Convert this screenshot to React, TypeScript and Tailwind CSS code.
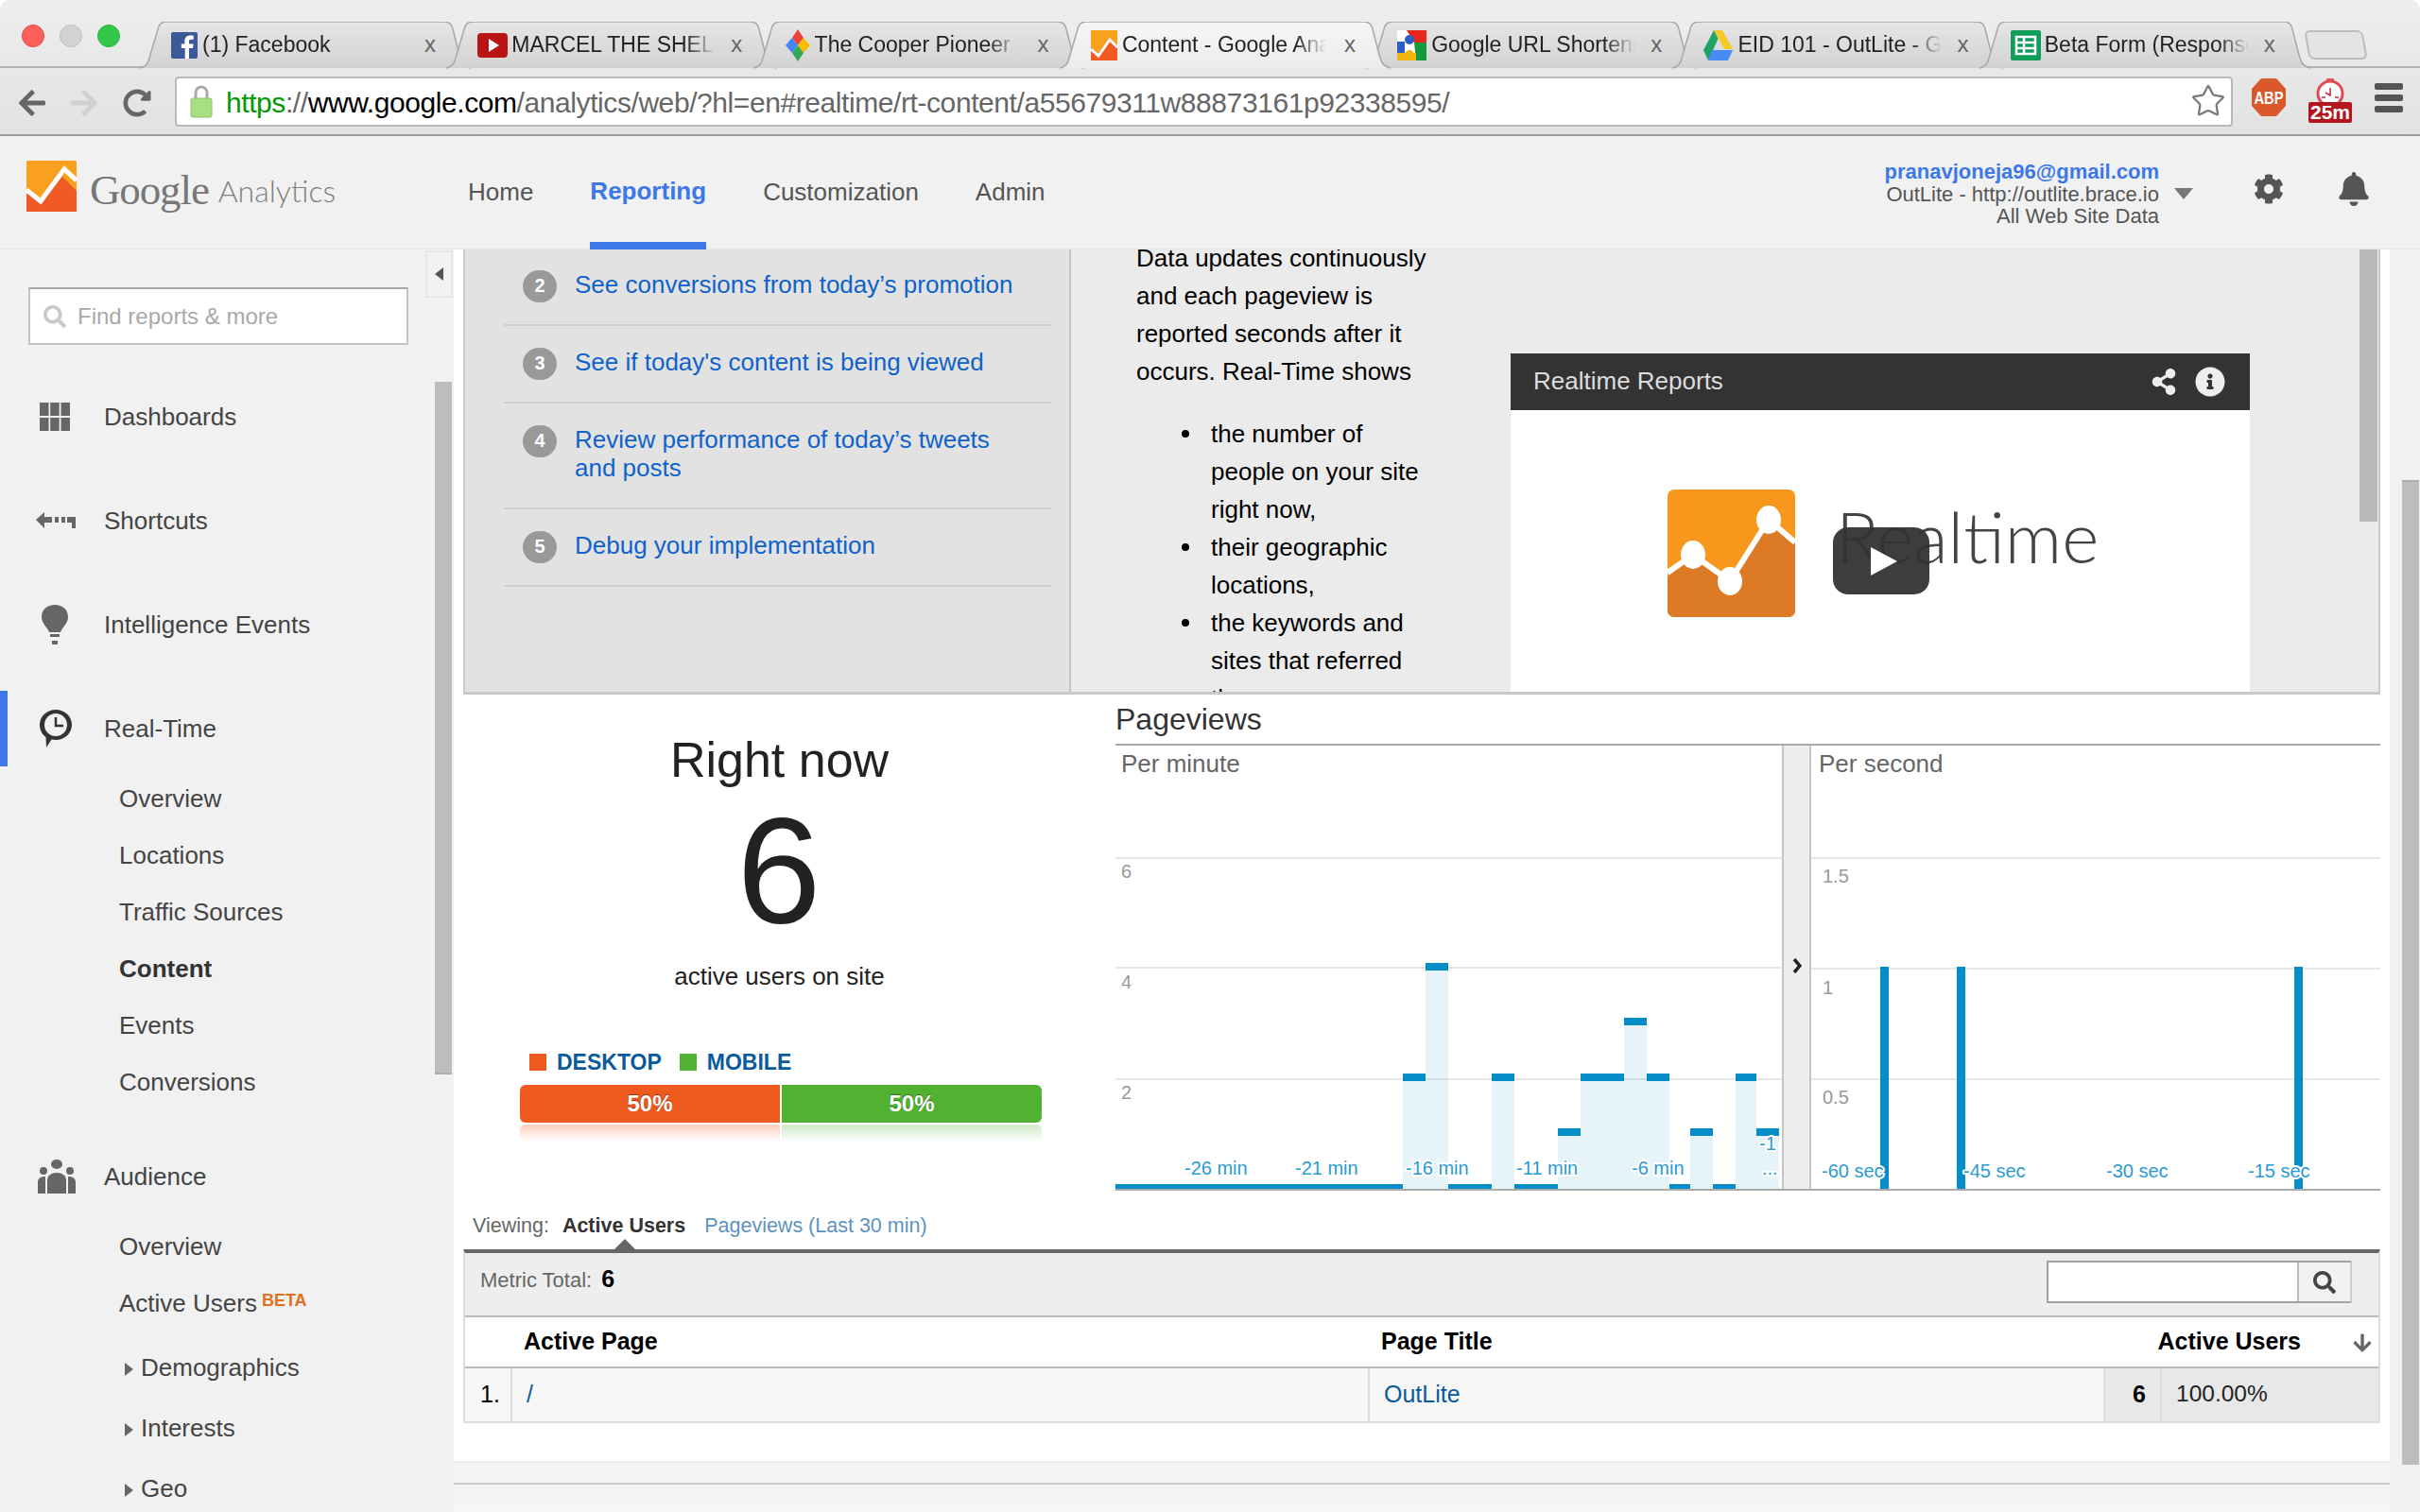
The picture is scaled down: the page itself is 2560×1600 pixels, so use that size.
import React from "react";
import { FaBell, FaCog, FaInfoCircle, FaSearch, FaShareAlt, FaArrowLeft, FaArrowRight, FaRedoAlt, FaArrowDown } from "react-icons/fa";
import { Star } from "lucide-react";

const Facebook = () => (
  <svg width="28" height="28" viewBox="0 0 28 28" className="shrink-0">
    <rect width="28" height="28" rx="2" fill="#3d5a98" />
    <path d="M19 28V17h4l.6-4.500H19V10c0-1.300.4-2.200 2.300-2.200h2.400V3.700c-.4 0-1.800-.2-3.500-.2-3.500 0-5.900 2.100-5.900 6v3H10.800V17h3.900v11z" fill="#fff" />
  </svg>
);
const Youtube = () => (
  <svg width="32" height="32" viewBox="0 0 32 32" className="shrink-0">
    <rect y="3" width="32" height="26" rx="4" fill="#b81414" />
    <path d="M12 9l11 7-11 7z" fill="#fff" />
  </svg>
);
const Pioneer = () => (
  <svg width="28" height="34" viewBox="0 0 28 34" className="shrink-0">
    <path d="M14 0l6 9-6 8-6-8z" fill="#ea4335" />
    <path d="M20 9l7 8-7 8-6-8z" fill="#fbbc05" />
    <path d="M8 9l6 8-6 8-7-8z" fill="#4285f4" />
    <path d="M14 17l6 8-6 9-6-9z" fill="#34a853" />
  </svg>
);
const GaFav = () => (
  <svg width="28" height="32" viewBox="0 0 28 32" className="shrink-0">
    <rect width="28" height="32" fill="#f9a11f" />
    <path d="M0 32V18l8 6 12-16 8 8v16z" fill="#f15a22" />
    <path d="M0 20l8 7L20 10l8 8" stroke="#fff" strokeWidth="3" fill="none" />
  </svg>
);
const GoogleFav = () => (
  <svg width="31" height="32" viewBox="0 0 31 32" className="shrink-0">
    <rect width="31" height="32" fill="#fff" />
    <path d="M10 0h21v13H18z" fill="#e8261c" />
    <path d="M0 12h8v12H0z" fill="#2a5fc4" />
    <path d="M18 13h13v19H20z" fill="#119b3c" />
    <path d="M0 24h20v8H0z" fill="#f2b50f" />
    <circle cx="13" cy="10" r="5" fill="#2a5fc4" />
    <circle cx="13" cy="26" r="5" fill="#f2b50f" />
  </svg>
);
const Drive = () => (
  <svg width="32" height="32" viewBox="0 0 32 32" className="shrink-0">
    <path d="M11 0h9l11 20h-9z" fill="#f7c927" />
    <path d="M11 0l4.500 9L5 32l-5-11z" fill="#1ea362" />
    <path d="M9 21h22l-5 11H5z" fill="#4a8af4" />
  </svg>
);
const Sheets = () => (
  <svg width="32" height="32" viewBox="0 0 32 32" className="shrink-0">
    <rect width="32" height="32" rx="2" fill="#0f9d58" />
    <path d="M6 7h20v18H6zM6 13h20M6 19h20M14 7v18" fill="none" stroke="#fff" strokeWidth="2.500" />
  </svg>
);

const tabs = [
  { t: "(1) Facebook", i: <Facebook />, gap: "mr-[5px]" },
  { t: "MARCEL THE SHELL", i: <Youtube />, gap: "mr-[4px]" },
  { t: "The Cooper Pioneer |", i: <Pioneer />, gap: "mr-[4px]" },
  { t: "Content - Google Analytics", i: <GaFav />, gap: "mr-[5px]", active: true },
  { t: "Google URL Shortener", i: <GoogleFav />, gap: "mr-[5px]" },
  { t: "EID 101 - OutLite - Google", i: <Drive />, gap: "mr-[4px]" },
  { t: "Beta Form (Responses)", i: <Sheets />, gap: "mr-[4px]" },
];

function Tab({ t, i, gap, active }: { t: string; i: React.ReactNode; gap: string; active?: boolean }) {
  return (
    <div className={`relative w-[324.3px] h-[49px] shrink-0 ${active ? "z-10" : ""}`}>
      <svg className="absolute left-0 top-0" width="350" height="50" viewBox="0 0 350 50">
        <defs>
          <linearGradient id={active ? "tabA" : "tabI"} x1="0" y1="0" x2="0" y2="1">
            <stop offset="0" stopColor={active ? "#f6f6f6" : "#e6e6e6"} />
            <stop offset="1" stopColor={active ? "#ececec" : "#d2d2d2"} />
          </linearGradient>
        </defs>
        <path
          d="M0 49c8-2 9-6 11-14L19 8c1-5 4-8 9-8h294c5 0 8 3 9 8l7 27c2 8 4 12 12 14"
          fill={`url(#${active ? "tabA" : "tabI"})`}
          stroke="#a8a8a8"
          strokeWidth="1.500"
        />
      </svg>
      <div className="absolute left-[33px] right-0 top-0 h-[49px] flex items-center">
        <span className={`${gap} flex items-center`}>{i}</span>
        <span className="w-[216px] overflow-hidden whitespace-nowrap text-[23px] text-[#222] [mask-image:linear-gradient(to_right,#000_85%,transparent_100%)]">
          {t}
        </span>
      </div>
      <span className="absolute left-[301px] top-[9px] text-[24px] leading-[30px] text-[#666]">x</span>
    </div>
  );
}

function TopChrome() {
  return (
    <div className="h-[144px] shrink-0 flex flex-col border-b-2 border-[#9a9a9a] bg-gradient-to-b from-[#eeeeee] to-[#e2e2e2] rounded-t-[10px]">
      <div className="h-[72px] flex items-start pt-[23px] border-b-2 border-[#b4b4b4]">
        <div className="flex gap-[16px] pl-[23px] pr-[28px] pt-[3px]">
          <span className="w-[24px] h-[24px] rounded-full bg-[#fc615d] border border-[#e2463f]" />
          <span className="w-[24px] h-[24px] rounded-full bg-[#d2d2d2] border border-[#c0c0c0]" />
          <span className="w-[24px] h-[24px] rounded-full bg-[#34c84a] border border-[#2ab13e]" />
        </div>
        <div className="flex -ml-[7px]">
          {tabs.map((x) => (
            <Tab key={x.t} {...x} />
          ))}
        </div>
        <div className="ml-[22px] mt-[9px] w-[62px] h-[31px] rounded-[6px] border-2 border-[#bdbdbd] bg-[#e4e4e4] [transform:skewX(10deg)]" />
      </div>
      <div className="h-[70px] flex items-center">
        <div className="w-[185px] flex items-center pl-[18px] pt-[3px] shrink-0">
          <FaArrowLeft size={32} color="#666" />
          <FaArrowRight size={32} color="#d0d0d0" className="ml-[23px]" />
          <FaRedoAlt size={30} color="#666" className="ml-[25px]" />
        </div>
        <div className="w-[2177px] h-[53px] bg-white border-2 border-[#b9b9b9] rounded-[4px] flex items-center pl-[14px] pr-[5px] shrink-0">
          <svg width="24" height="36" viewBox="0 0 24 36" className="shrink-0">
            <path d="M6 17V9a6 6 0 0 1 12 0v8" fill="none" stroke="#a9a9a9" strokeWidth="3" />
            <rect x="1" y="15" width="22" height="20" rx="2" fill="#a8de84" stroke="#8fc46c" />
          </svg>
          <span className="ml-[14px] pt-[3px] text-[30px] leading-none whitespace-nowrap text-[#666] tracking-[-0.42px]">
            <span className="text-[#009a00]">https</span>://<span className="text-black">www.google.com</span>
            /analytics/web/?hl=en#realtime/rt-content/a55679311w88873161p92338595/
          </span>
          <Star size={38} strokeWidth={1.4} color="#777" className="ml-auto" />
        </div>
        <svg width="38" height="42" viewBox="0 0 38 42" className="ml-[19px] shrink-0 -mt-[8px]">
          <path d="M11 1h16l10 11v18L27 41H11L1 30V12z" fill="#d9582c" />
          <text x="19" y="28" textAnchor="middle" fontSize="19" fontWeight="700" fill="#fff" fontFamily="Liberation Sans, sans-serif" textLength="31" lengthAdjust="spacingAndGlyphs">ABP</text>
        </svg>
        <div className="ml-[23px] w-[46px] flex flex-col items-center shrink-0 -mt-[2px]">
          <svg width="36" height="28" viewBox="0 0 36 28" className="-mb-[3px]">
            <rect x="14" y="0" width="8" height="4" fill="#e4545c" />
            <circle cx="18" cy="16" r="13" fill="#fff" stroke="#df4b53" strokeWidth="3" />
            <path d="M9 20h4M23 20h4M18 10l0 8-5-3" stroke="#b3333b" strokeWidth="1.500" fill="none" />
          </svg>
          <div className="w-[46px] h-[22px] bg-[#b3161e] text-white text-[21px] font-bold leading-[22px] text-center rounded-[2px]">25m</div>
        </div>
        <div className="ml-[24px] flex flex-col gap-[5px] -mt-[8px] shrink-0">
          <span className="w-[30px] h-[7px] rounded-[2px] bg-[#555]" />
          <span className="w-[30px] h-[7px] rounded-[2px] bg-[#555]" />
          <span className="w-[30px] h-[7px] rounded-[2px] bg-[#555]" />
        </div>
      </div>
    </div>
  );
}

function AppHeader() {
  return (
    <div className="h-[120px] shrink-0 bg-[#f1f1f1] flex border-b border-[#e8e8e8]">
      <div className="pl-[28px] pt-[26px] flex items-start w-[495px] shrink-0">
        <svg width="53" height="54" viewBox="0 0 53 54" className="shrink-0">
          <rect width="53" height="54" rx="1.500" fill="#f9a01e" />
          <path d="M0 54V34l15 10L38 17l15 15v22z" fill="#f15a24" />
          <path d="M0 31l15 12L40 9l13 12" fill="none" stroke="#fff" strokeWidth="5" />
        </svg>
        <span className="ml-[14px] mt-[6px] font-['Liberation_Serif',serif] text-[45px] leading-[50px] tracking-[-0.025em] text-[#777]">Google</span>
        <span className="ml-[10px] mt-[12px] font-['Lato',sans-serif] font-light text-[32px] leading-[40px] text-[#808080]">Analytics</span>
      </div>
      <nav className="flex gap-[60px] text-[26px] text-[#555]">
        <span className="h-[120px] flex items-center -mt-[1px]">Home</span>
        <span className="h-[120px] flex items-center pt-[5px] border-b-8 border-[#3c78e8] text-[#3c78e8] font-bold">Reporting</span>
        <span className="h-[120px] flex items-center -mt-[1px]">Customization</span>
        <span className="h-[120px] flex items-center -mt-[1px]">Admin</span>
      </nav>
      <div className="ml-auto flex items-start pt-[26px] pr-[52px]">
        <div className="text-right text-[22px] leading-[23.5px] text-[#555]">
          <div className="font-bold text-[#3c78e8]">pranavjoneja96@gmail.com</div>
          <div>OutLite - http://outlite.brace.io</div>
          <div>All Web Site Data</div>
        </div>
        <svg width="20" height="12" viewBox="0 0 20 12" className="ml-[16px] mt-[29px]"><path d="M0 0h20L10 12z" fill="#777" /></svg>
        <FaCog size={32} color="#555" className="ml-[64px] mt-[14px]" />
        <FaBell size={36} color="#555" className="ml-[56px] mt-[12px]" />
      </div>
    </div>
  );
}

const IconGrid = () => (
  <svg width="32" height="30" viewBox="0 0 32 30" fill="#666">
    <rect width="9.500" height="14" /><rect x="11.200" width="9.500" height="14" /><rect x="22.500" width="9.500" height="14" />
    <rect y="16" width="9.500" height="14" /><rect x="11.200" y="16" width="9.500" height="14" /><rect x="22.500" y="16" width="9.500" height="14" />
  </svg>
);
const IconShortcut = () => (
  <svg width="42" height="18" viewBox="0 0 42 18" fill="#666" className="-ml-[4px]">
    <path d="M0 8l9-8v5h8v6H9v6z" />
    <rect x="20" y="5" width="4" height="6" /><rect x="27" y="5" width="4" height="6" />
    <path d="M33 5h9v12h-4v-6h-5z" />
  </svg>
);
const IconBulb = () => (
  <svg width="28" height="42" viewBox="0 0 28 42" fill="#666" className="ml-[2px]">
    <path d="M14 0C6 0 0 5 0 13c0 7 6 10 8 16h12c2-6 8-9 8-16C28 5 22 0 14 0z" />
    <rect x="9" y="31" width="10" height="3" /><rect x="11" y="38" width="6" height="4" />
  </svg>
);
const IconClock = () => (
  <svg width="34" height="40" viewBox="0 0 34 40">
    <path d="M17 0c9.400 0 17 7 17 16s-7.600 16-17 16c-1.500 0-3 0-4.500-.4L7 40l-.5-11C2.500 26 0 21.500 0 16 0 7 7.600 0 17 0z" fill="#333" />
    <circle cx="17" cy="16" r="12" fill="#f1f1f1" />
    <path d="M17 8v9h8" fill="none" stroke="#333" strokeWidth="2.500" />
  </svg>
);
const IconAudience = () => (
  <svg width="40" height="36" viewBox="0 0 40 36" fill="#666" className="-ml-[2px]">
    <ellipse cx="20" cy="5" rx="6" ry="5" /><ellipse cx="6" cy="12" rx="4" ry="4" /><ellipse cx="34" cy="12" rx="4" ry="4" />
    <path d="M10 36V22c0-5 4-8 10-8s10 3 10 8v14z" />
    <path d="M0 36V24c0-4 3-6 8-6v18zM40 36V24c0-4-3-6-8-6v18z" />
  </svg>
);

function TopItem({ icon, label, active }: { icon: React.ReactNode; label: string; active?: boolean }) {
  return (
    <div className={`h-[80px] flex items-center ${active ? "border-l-8 border-[#3c78e8] pl-[34px]" : "pl-[42px]"}`}>
      <span className="w-[68px] shrink-0 flex items-center">{icon}</span>
      <span>{label}</span>
    </div>
  );
}
const Sub = ({ children, bold }: { children: React.ReactNode; bold?: boolean }) => (
  <div className={`h-[60px] flex items-center pl-[126px] ${bold ? "font-bold text-[#333]" : ""}`}>{children}</div>
);
const Caret = ({ label }: { label: string }) => (
  <div className="h-[64px] flex items-center pl-[132px]">
    <svg width="9" height="14" viewBox="0 0 9 14" className="mr-[8px] mt-[3px]"><path d="M0 0l9 7-9 7z" fill="#666" /></svg>
    {label}
  </div>
);

function Sidebar() {
  return (
    <aside className="w-[480px] shrink-0 bg-[#f1f1f1] flex overflow-hidden">
      <div className="w-[450px] shrink-0 text-[26px] text-[#444]">
        <div className="mt-[40px] ml-[30px] w-[402px] h-[61px] bg-white border-2 border-[#c4c4c4] border-t-[#a8a8a8] flex items-center pl-[14px]">
          <FaSearch size={24} color="#c9c9c9" />
          <span className="ml-[12px] text-[24px] text-[#a9a9a9]">Find reports &amp; more</span>
        </div>
        <div className="mt-[36px] flex flex-col gap-[30px]">
          <TopItem icon={<IconGrid />} label="Dashboards" />
          <TopItem icon={<IconShortcut />} label="Shortcuts" />
          <TopItem icon={<IconBulb />} label="Intelligence Events" />
        </div>
        <div className="mt-[30px]">
          <TopItem icon={<IconClock />} label="Real-Time" active />
        </div>
        <div className="mt-[4px]">
          <Sub>Overview</Sub>
          <Sub>Locations</Sub>
          <Sub>Traffic Sources</Sub>
          <Sub bold>Content</Sub>
          <Sub>Events</Sub>
          <Sub>Conversions</Sub>
        </div>
        <div className="mt-[30px]">
          <TopItem icon={<IconAudience />} label="Audience" />
        </div>
        <div className="mt-[4px]">
          <Sub>Overview</Sub>
          <Sub>
            Active Users
            <span className="ml-[5px] -mt-[6px] text-[18px] font-bold text-[#e0701e]">BETA</span>
          </Sub>
        </div>
        <div className="mt-[6px]">
          <Caret label="Demographics" />
          <Caret label="Interests" />
          <Caret label="Geo" />
        </div>
      </div>
      <div className="w-[30px] shrink-0 flex flex-col">
        <div className="w-[29px] h-[50px] mt-[1px] border-2 border-[#e6e6e6] flex items-center justify-center">
          <svg width="9" height="14" viewBox="0 0 9 14"><path d="M9 0L0 7l9 7z" fill="#555" /></svg>
        </div>
        <div className="ml-[10px] mt-[89px] w-[18px] h-[733px] bg-[#bdbdbd] border-b-2 border-[#adadad]" />
      </div>
    </aside>
  );
}

const steps = [
  { n: 2, t: <>See conversions from today’s promotion</> },
  { n: 3, t: <>See if today's content is being viewed</> },
  { n: 4, t: <>Review performance of today’s tweets<br />and posts</> },
  { n: 5, t: <>Debug your implementation</> },
];

const Bullet = () => <span className="absolute -left-[31px] top-[16px] w-[8px] h-[8px] rounded-full bg-black" />;

function HelpPanel() {
  return (
    <div className="h-[471px] w-[2028px] shrink-0 flex border-b-[3px] border-r-2 border-l-2 border-[#c8c8c8] overflow-hidden shadow-[inset_0_10px_8px_-8px_rgba(0,0,0,0.12)]">
      <div className="w-[641px] shrink-0 bg-[#e2e2e2] border-r-2 border-[#c4c4c4] pl-[41px]">
        <div className="w-[579px] -mt-px">
          {steps.map((s) => (
            <div key={s.n} className="flex items-start pl-[20px] pt-[23px] pb-[27px] border-b-2 border-[#cfcfcf] text-[26px] leading-[30px] text-[#0f62cb]">
              <span className="w-[36px] h-[30px] shrink-0 flex justify-center">
                <span className="w-[36px] h-[34px] shrink-0 rounded-full bg-[#999] text-white text-[20px] font-bold leading-[32px] text-center">{s.n}</span>
              </span>
              <span className="ml-[19px]">{s.t}</span>
            </div>
          ))}
        </div>
      </div>
      <div className="flex-1 bg-[#ebebeb] flex">
        <div className="w-[465px] shrink-0 pl-[69px] text-[26px] leading-[40px] text-black -mt-[11px]">
          <p>Data updates continuously<br />and each pageview is<br />reported seconds after it<br />occurs. Real-Time shows</p>
          <ul className="pl-[79px] mt-[26px]">
            <li className="relative"><Bullet />the number of<br />people on your site<br />right now,</li>
            <li className="relative"><Bullet />their geographic<br />locations,</li>
            <li className="relative"><Bullet />the keywords and<br />sites that referred<br />them</li>
          </ul>
        </div>
        <div className="w-[782px] shrink-0 mt-[110px] bg-white">
          <div className="h-[60px] bg-[#333] flex items-center pl-[24px] pr-[26px] text-[26px] text-[#ddd]">
            <span className="-mt-[1px]">Realtime Reports</span>
            <FaShareAlt size={28} color="#eee" className="ml-auto" />
            <FaInfoCircle size={32} color="#eee" className="ml-[19px]" />
          </div>
          <div className="relative flex items-start pl-[166px] pt-[84px]">
            <svg width="135" height="135" viewBox="0 0 135 135" className="shrink-0">
              <rect width="135" height="135" rx="7" fill="#f7981d" />
              <path d="M0 92l27-23 39 28 41-65 28 24v72a7 7 0 0 1-7 7H7a7 7 0 0 1-7-7z" fill="#dc7a26" />
              <path d="M0 88l27-19 39 28 41-65 28 24" fill="none" stroke="#fff" strokeWidth="6" />
              <ellipse cx="27" cy="69" rx="13" ry="15" fill="#fff" />
              <ellipse cx="66" cy="97" rx="13" ry="15" fill="#fff" />
              <ellipse cx="107" cy="32" rx="13" ry="15" fill="#fff" />
            </svg>
            <span className="ml-[43px] mt-[4px] font-['Lato',sans-serif] font-light text-[75px] leading-[90px] text-[#444]">Realtime</span>
            <div className="absolute left-[341px] top-[124px] w-[102px] h-[71px] rounded-[16px] bg-[#333]/95 flex items-center justify-center pl-[6px]">
              <svg width="28" height="30" viewBox="0 0 28 30"><path d="M0 0l28 15L0 30z" fill="#fff" /></svg>
            </div>
          </div>
        </div>
        <div className="ml-auto mr-[1px] w-[19px] h-[288px] bg-[#b9b9b9]" />
      </div>
    </div>
  );
}

const MIN_TOP = 347, MIN_MID = 405, MIN_HI1 = 230, MIN_HI2 = 288, BASE = 469;
const minuteBars = [
  [1484, 1508, MIN_TOP], [1508, 1532, MIN_HI1], [1578, 1602, MIN_TOP], [1648, 1672, MIN_MID],
  [1672, 1718, MIN_TOP], [1718, 1742, MIN_HI2], [1742, 1766, MIN_TOP], [1788, 1812, MIN_MID],
  [1836, 1858, MIN_TOP], [1858, 1882, MIN_MID],
];
const minuteZero = [[1180, 1484], [1532, 1578], [1602, 1648], [1766, 1788], [1812, 1836]];
const halo = { paintOrder: "stroke" as const, stroke: "#fff", strokeWidth: 4, strokeLinejoin: "round" as const };

function PerMinute() {
  return (
    <svg width="705" height="469" viewBox="0 0 705 469" className="shrink-0 block font-['Liberation_Sans',sans-serif]">
      {[118, 234, 352].map((y) => <rect key={y} x="0" y={y} width="705" height="2" fill="#e6e6e6" />)}
      <text x="6" y="28" fontSize="26" fill="#666">Per minute</text>
      {[["6", 140], ["4", 257], ["2", 374]].map(([t, y]) => <text key={t} x="6" y={y as number} fontSize="20" fill="#999">{t}</text>)}
      {minuteBars.map(([a, b, y]) => (
        <g key={a}>
          <rect x={a - 1180} y={y} width={b - a} height={BASE - y} fill="#058dc7" fillOpacity="0.1" />
          <rect x={a - 1180} y={y} width={b - a} height="8" fill="#058dc7" />
        </g>
      ))}
      {minuteZero.map(([a, b]) => <rect key={a} x={a - 1180} y="464" width={b - a} height="5" fill="#058dc7" />)}
      {[["-26 min", 73], ["-21 min", 190], ["-16 min", 307], ["-11 min", 424], ["-6 min", 546], ["-1", 681]].map(([t, x]) => (
        <text key={t} x={x as number} y={t === "-1" ? 428 : 454} fontSize="20" fill="#2a9bd2" style={halo}>{t}</text>
      ))}
      <text x="684" y="454" fontSize="20" fill="#2a9bd2" style={halo}>...</text>
    </svg>
  );
}
function PerSecond() {
  return (
    <svg width="602" height="469" viewBox="0 0 602 469" className="shrink-0 block font-['Liberation_Sans',sans-serif]">
      {[118, 235, 352].map((y) => <rect key={y} x="0" y={y} width="602" height="2" fill="#e6e6e6" />)}
      <text x="8" y="28" fontSize="26" fill="#666">Per second</text>
      {[["1.5", 145], ["1", 263], ["0.5", 379]].map(([t, y]) => <text key={t} x="12" y={y as number} fontSize="20" fill="#999">{t}</text>)}
      {[73, 154, 511].map((x) => <rect key={x} x={x} y="234" width="9" height="235" fill="#058dc7" />)}
      {[["-60 sec", 11], ["-45 sec", 161], ["-30 sec", 312], ["-15 sec", 462]].map(([t, x]) => (
        <text key={t} x={x as number} y="457" fontSize="20" fill="#2a9bd2" style={halo}>{t}</text>
      ))}
    </svg>
  );
}

function Realtime() {
  return (
    <div className="h-[547px] w-[2028px] shrink-0 flex">
      <div className="w-[690px] shrink-0 pl-[60px]">
        <div className="w-[552px] flex flex-col items-center text-[#222]">
          <div className="mt-[39px] -ml-[3px] text-[52px] leading-[60px]">Right now</div>
          <div className="mt-[7px] -ml-[4px] text-[160px] leading-[160px]">6</div>
          <div className="mt-[17px] -ml-[3px] text-[26px] leading-[30px]">active users on site</div>
          <div className="self-start mt-[62px] ml-[10px] h-[28px] flex items-center text-[23px] font-bold text-[#0a5a9c]">
            <span className="w-[18px] h-[18px] bg-[#ee5a1e]" />
            <span className="ml-[11px]">DESKTOP</span>
            <span className="ml-[19px] w-[18px] h-[18px] bg-[#51b231]" />
            <span className="ml-[11px]">MOBILE</span>
          </div>
          <div className="mt-[10px] w-[552px] h-[40px] flex text-[24px] font-bold text-white text-center leading-[40px] rounded-[6px] overflow-hidden">
            <span className="w-[275px] bg-[#ee5a1e] [text-shadow:0_-1px_1px_rgba(0,0,0,0.4)]">50%</span>
            <span className="w-[2px] bg-white" />
            <span className="flex-1 bg-[#51b231] [text-shadow:0_-1px_1px_rgba(0,0,0,0.4)]">50%</span>
          </div>
          <div className="mt-[2px] w-[552px] h-[18px] flex rounded-t-[6px] overflow-hidden">
            <span className="w-[275px] bg-gradient-to-b from-[#fbd0bd] to-white" />
            <span className="w-[2px] bg-white" />
            <span className="flex-1 bg-gradient-to-b from-[#cfe9c6] to-white" />
          </div>
        </div>
      </div>
      <div className="w-[1338px] shrink-0">
        <div className="h-[54px] pt-[8px] text-[32px] leading-[36px] text-[#333] border-b-2 border-[#aaa]">Pageviews</div>
        <div className="flex border-b-2 border-[#aaa]">
          <PerMinute />
          <div className="w-[31px] shrink-0 bg-[#eeeeee] border-x-2 border-[#c4c4c4] flex items-center justify-center pb-[4px]">
            <svg width="10" height="16" viewBox="0 0 10 16"><path d="M2 1l6 7-6 7" fill="none" stroke="#222" strokeWidth="3.500" /></svg>
          </div>
          <PerSecond />
        </div>
      </div>
    </div>
  );
}

function DataTable() {
  return (
    <>
      <div className="relative w-[2028px] h-[40px] shrink-0 pl-[10px] text-[21.5px] leading-[30px] text-[#666] whitespace-nowrap">
        Viewing:
        <span className="ml-[14px] font-bold text-[#333]">Active Users</span>
        <span className="ml-[20px] text-[#5d93c0]">Pageviews (Last 30 min)</span>
        <span className="absolute left-[160px] bottom-0 w-0 h-0 border-x-[11px] border-x-transparent border-b-[11px] border-b-[#666]" />
      </div>
      <div className="w-[2028px] shrink-0 border-t-4 border-[#666] border-x-2 border-x-[#ddd]">
        <div className="h-[68px] bg-[#eeeeee] border-b-2 border-[#bbb] flex pr-[28px]">
          <div className="pl-[16px] pt-[13px] text-[22px] leading-[28px] text-[#666]">
            Metric Total: <span className="ml-[4px] text-[25px] font-bold text-black">6</span>
          </div>
          <div className="ml-auto mt-[8px] w-[323px] h-[45px] flex bg-white border-2 border-[#a3a3a3] border-r-[#ccc] rounded-r-[2px]">
            <span className="flex-1" />
            <span className="w-[56px] bg-[#f1f1f1] border-l-2 border-[#bbb] flex items-center justify-center">
              <FaSearch size={24} color="#444" />
            </span>
          </div>
        </div>
        <div className="h-[54px] border-b-2 border-[#bbb] flex items-center pb-[1px] text-[25px] font-bold text-black relative">
          <span className="ml-[62px] w-[907px]">Active Page</span>
          <span>Page Title</span>
          <span className="ml-auto mr-[82px]">Active Users</span>
          <FaArrowDown size={22} color="#666" className="absolute right-[6px] top-[16px]" />
        </div>
        <div className="h-[58px] border-b-2 border-[#ddd] bg-[#f7f7f7] flex text-[25px] leading-[54px]">
          <span className="w-[50px] shrink-0 pl-[16px] border-r-2 border-[#ddd] text-black">1.</span>
          <span className="w-[907px] shrink-0 pl-[15px] border-r-2 border-[#ddd] text-[#0a5a9c]">/</span>
          <span className="w-[776px] shrink-0 pl-[15px] text-[#0a5a9c]">OutLite</span>
          <span className="w-[60px] shrink-0 pr-[15px] text-right font-bold bg-[#e8e8e8] border-l-2 border-[#ddd] text-black">6</span>
          <span className="flex-1 pl-[15px] text-[24.5px] bg-[#e8e8e8] border-l-2 border-[#ddd] text-[#222]">100.00%</span>
        </div>
      </div>
    </>
  );
}

export default function App() {
  return (
    <div className="w-[2560px] h-[1600px] overflow-hidden flex flex-col bg-white font-['Liberation_Sans',Arial,sans-serif]">
      <TopChrome />
      <AppHeader />
      <div className="flex-1 flex min-h-0">
        <Sidebar />
        <main className="w-[2048px] shrink-0 flex flex-col pl-[10px] overflow-hidden">
          <HelpPanel />
          <Realtime />
          <DataTable />
          <div className="-ml-[10px] mt-[40px] h-[25px] bg-[#f4f4f4] border-t-2 border-[#eeeeee] border-b-2 border-b-[#cccccc] shrink-0" />
          <div className="-ml-[10px] flex-1 bg-gradient-to-b from-[#f1f1f1] to-[#f8f8f8]" />
        </main>
        <div className="w-[32px] shrink-0 bg-[#f1f1f1] pl-[13px] pt-[244px]">
          <div className="w-[18px] h-[1042px] bg-[#bdbdbd] border-t-2 border-[#adadad]" />
        </div>
      </div>
    </div>
  );
}
